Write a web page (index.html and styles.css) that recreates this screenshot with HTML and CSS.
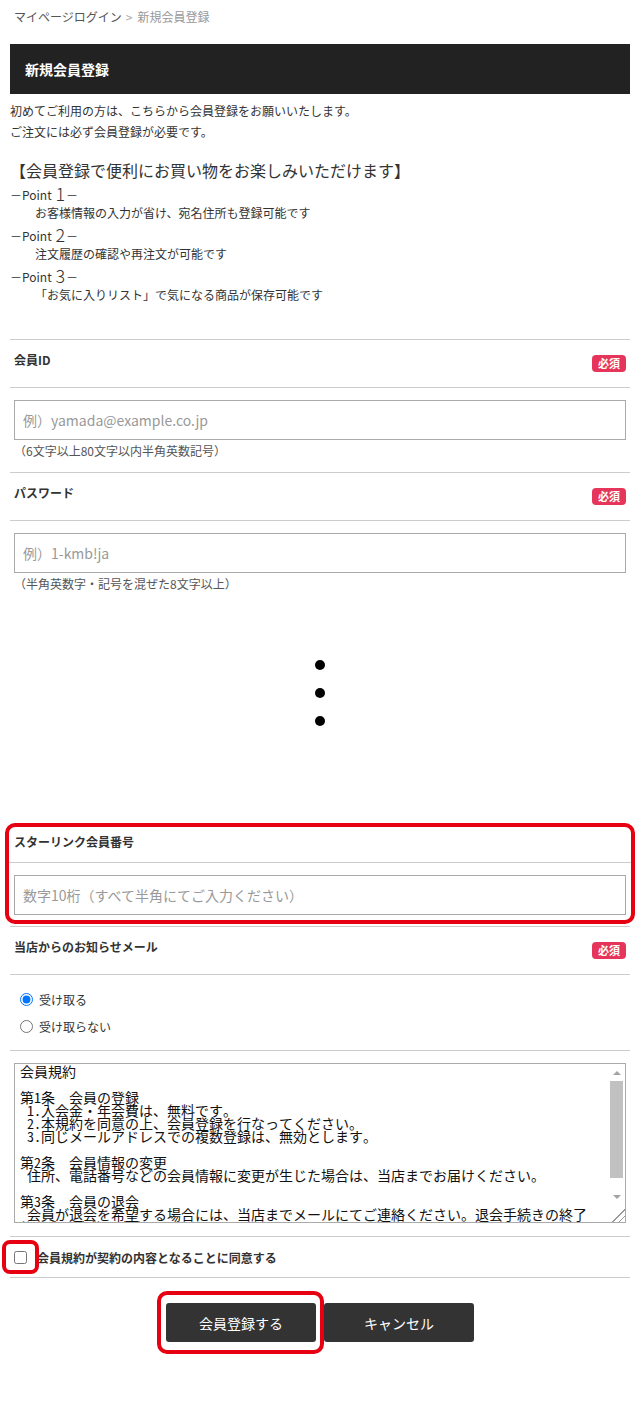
FILE: index.html
```html
<!DOCTYPE html>
<html lang="ja">
<head>
<meta charset="utf-8">
<title>新規会員登録</title>
<link rel="stylesheet" href="styles.css">
</head>
<body>
<div class="page">
  <nav class="breadcrumb"><span class="crumb">マイページログイン</span><span class="sep">&gt;</span><span class="current">新規会員登録</span></nav>
  <h1 class="title-bar">新規会員登録</h1>
  <div class="intro">
    <p>初めてご利用の方は、こちらから会員登録をお願いいたします。</p>
    <p>ご注文には必ず会員登録が必要です。</p>
  </div>
  <div class="points">
    <h2 class="points-title">【会員登録で便利にお買い物をお楽しみいただけます】</h2>
    <div class="point-head">－Point <span class="num">1</span>－</div>
    <div class="point-desc">お客様情報の入力が省け、宛名住所も登録可能です</div>
    <div class="point-head">－Point <span class="num">2</span>－</div>
    <div class="point-desc">注文履歴の確認や再注文が可能です</div>
    <div class="point-head">－Point <span class="num">3</span>－</div>
    <div class="point-desc">「お気に入りリスト」で気になる商品が保存可能です</div>
  </div>

  <form class="form">
    <section class="field">
      <div class="field-head"><span class="label">会員ID</span><span class="badge">必須</span></div>
      <div class="field-body">
        <input class="text-input" type="text" placeholder="例）yamada@example.co.jp">
        <p class="note">（6文字以上80文字以内半角英数記号）</p>
      </div>
    </section>
    <section class="field">
      <div class="field-head"><span class="label">パスワード</span><span class="badge">必須</span></div>
      <div class="field-body">
        <input class="text-input" type="password" placeholder="例）1-kmb!ja">
        <p class="note">（半角英数字・記号を混ぜた8文字以上）</p>
      </div>
    </section>

    <div class="omit"><span class="dot"></span><span class="dot"></span><span class="dot"></span></div>

    <div class="highlight">
      <section class="field field-compact">
        <div class="field-head"><span class="label">スターリンク会員番号</span></div>
        <div class="field-body">
          <input class="text-input" type="text" placeholder="数字10桁（すべて半角にてご入力ください）">
        </div>
      </section>
    </div>

    <section class="field field-mail">
      <div class="field-head"><span class="label">当店からのお知らせメール</span><span class="badge">必須</span></div>
      <div class="field-body radios">
        <label class="radio-row"><input type="radio" name="mail" checked><span>受け取る</span></label>
        <label class="radio-row"><input type="radio" name="mail"><span>受け取らない</span></label>
      </div>
    </section>

    <section class="field field-terms">
      <div class="field-body">
        <div class="terms-box">
          <textarea class="terms" readonly>会員規約

第1条　会員の登録
 1.入会金・年会費は、無料です。
 2.本規約を同意の上、会員登録を行なってください。
 3.同じメールアドレスでの複数登録は、無効とします。

第2条　会員情報の変更
 住所、電話番号などの会員情報に変更が生じた場合は、当店までお届けください。

第3条　会員の退会
 会員が退会を希望する場合には、当店までメールにてご連絡ください。退会手続きの終了
後、会員資格を喪失します。

第4条　個人情報の取り扱い
 お客様の個人情報は、当店の個人情報保護方針に基づき適切に管理します。</textarea>
          <div class="scrollbar" aria-hidden="true">
            <span class="sb-btn"><span class="tri tri-up"></span></span>
            <span class="sb-track"><span class="sb-thumb"></span></span>
            <span class="sb-btn"><span class="tri tri-down"></span></span>
            <span class="sb-grip"></span>
          </div>
        </div>
      </div>
    </section>

    <div class="agree">
      <span class="mark mark-check"><input type="checkbox" class="check"></span>
      <span class="agree-text">会員規約が契約の内容となることに同意する</span>
    </div>

    <div class="actions">
      <span class="mark mark-btn"><button type="button" class="btn">会員登録する</button></span>
      <button type="button" class="btn">キャンセル</button>
    </div>
  </form>
</div>
</body>
</html>
```

FILE: styles.css
```css
html, body {
  margin: 0;
  padding: 0;
  background: #fff;
}
body {
  font-family: "Noto Sans CJK JP", "Noto Sans", sans-serif;
  color: #333;
  font-size: 12px;
}
.page {
  padding: 0 10px 61px;
}
p { margin: 0; }

.breadcrumb {
  height: 44px;
  box-sizing: border-box;
  padding: 8px 4px 0;
  line-height: 18px;
  font-size: 12px;
}
.crumb { color: #555; }
.sep { color: #aaa; margin: 0 5px 0 4px; }
.current { color: #999; }

.title-bar {
  margin: 0;
  height: 50px;
  line-height: 50px;
  padding-left: 15px;
  background: #222;
  color: #fff;
  font-size: 14px;
  font-weight: bold;
}

.intro {
  padding-top: 6px;
  line-height: 21px;
  font-size: 12px;
  color: #333;
}

.points-title {
  margin: 16px 0 0;
  font-size: 16px;
  line-height: 24px;
  font-weight: normal;
  color: #333;
}
.point-head {
  display: flex;
  align-items: flex-end;
  height: 21px;
  line-height: 17px;
  font-size: 12px;
  color: #333;
  white-space: pre;
}
.point-head .num {
  display: inline-block;
  font-size: 18px;
  font-weight: 300;
  line-height: 19px;
  margin: 0 1px;
}
.point-desc {
  height: 20px;
  line-height: 20px;
  padding-left: 25px;
  font-size: 12px;
  color: #333;
}

.form {
  margin: 34px 0 0;
}
.field {
  border-top: 1px solid #ccc;
}
.field-head {
  height: 47px;
  padding: 0 4px;
  display: flex;
  justify-content: space-between;
  align-items: flex-start;
  border-bottom: 1px solid #ccc;
}
.label {
  margin-top: 11px;
  line-height: 18px;
  font-size: 12px;
  font-weight: bold;
  color: #333;
}
.badge {
  margin-top: 15px;
  width: 34px;
  height: 17px;
  line-height: 17px;
  text-align: center;
  border-radius: 4px;
  background: #e6355a;
  color: #fff;
  font-size: 11px;
  font-weight: bold;
}
.field-body {
  padding: 12px 4px;
}
.text-input {
  display: block;
  width: 100%;
  height: 40px;
  box-sizing: border-box;
  margin: 0;
  border: 1px solid #aaa;
  border-radius: 0;
  padding: 0 8px;
  font-family: inherit;
  font-size: 14px;
  color: #333;
  background: #fff;
}
.text-input::placeholder {
  color: #999;
}
.note {
  margin-top: 2px;
  line-height: 18px;
  font-size: 12px;
  color: #555;
}

.omit {
  display: flex;
  flex-direction: column;
  align-items: center;
  gap: 18px;
  padding: 55px 0 97px;
}
.dot {
  width: 10px;
  height: 10px;
  border-radius: 50%;
  background: #000;
}

.highlight {
  margin: 0 -5px;
  border: 4px solid #e60012;
  border-radius: 10px;
}
.field-compact {
  border-top: none;
}
.field-compact .field-head {
  height: 35px;
  padding: 0 5px;
}
.field-compact .label {
  margin-top: 6px;
}
.field-compact .field-body {
  padding: 12px 5px 5px;
}

.field-mail {
  margin-top: 2px;
}
.radios {
  padding: 11px 4px 10px;
}
.radio-row {
  display: flex;
  align-items: center;
  height: 27px;
  font-size: 12px;
  color: #333;
}
.radio-row input {
  width: 13px;
  height: 13px;
  margin: 0 6px 0 6px;
}

.field-terms .field-body {
  padding: 12px 4px 13px;
}
.terms-box {
  display: flex;
  height: 160px;
  box-sizing: border-box;
  border: 1px solid #aaa;
  background: #fff;
}
.terms {
  flex: 1;
  min-width: 0;
  margin: 0;
  border: none;
  outline: none;
  resize: none;
  overflow: hidden;
  padding: 1px 5px;
  font-family: "Noto Sans Mono CJK JP", "Noto Sans CJK JP", monospace;
  font-size: 14px;
  line-height: 13px;
  color: #111;
  background: #fff;
}
.scrollbar {
  width: 17px;
  display: flex;
  flex-direction: column;
  background: #fff;
}
.sb-btn {
  height: 17px;
  display: flex;
  align-items: center;
  justify-content: center;
}
.tri {
  width: 0;
  height: 0;
  border-left: 4px solid transparent;
  border-right: 4px solid transparent;
}
.tri-up {
  border-bottom: 4px solid #a3a3a3;
}
.tri-down {
  border-top: 4px solid #a3a3a3;
}
.sb-track {
  flex: 1;
  display: flex;
  flex-direction: column;
  padding: 0 2px;
}
.sb-thumb {
  height: 97px;
  background: #c1c1c1;
}
.sb-grip {
  height: 17px;
  background: linear-gradient(135deg, transparent 0 60%, #999 60% 65%, transparent 65% 80%, #999 80% 85%, transparent 85%);
}

.agree {
  display: flex;
  align-items: center;
  height: 40px;
  padding: 0 4px;
  border-top: 1px solid #ccc;
  border-bottom: 1px solid #ccc;
}
.mark {
  position: relative;
  display: block;
  flex: none;
}
.mark::after {
  content: "";
  position: absolute;
  box-sizing: border-box;
  border: 4px solid #e60012;
  pointer-events: none;
}
.mark-check {
  width: 13px;
  height: 13px;
  margin-right: 10px;
}
.mark-check::after {
  top: -11px;
  left: -12px;
  width: 37px;
  height: 34px;
  border-radius: 8px;
}
.check {
  display: block;
  width: 13px;
  height: 13px;
  margin: 0;
}
.agree-text {
  font-size: 12px;
  font-weight: bold;
  color: #333;
}

.actions {
  display: flex;
  justify-content: center;
  align-items: flex-start;
  gap: 8px;
  margin-top: 25px;
}
.mark-btn {
  width: 150px;
  height: 39px;
}
.mark-btn::after {
  top: -12px;
  left: -9px;
  width: 167px;
  height: 63px;
  border-radius: 10px;
}
.btn {
  display: block;
  width: 150px;
  height: 39px;
  margin: 0;
  border: none;
  border-radius: 3px;
  background: #333;
  color: #fff;
  font-family: inherit;
  font-size: 14px;
}
```
